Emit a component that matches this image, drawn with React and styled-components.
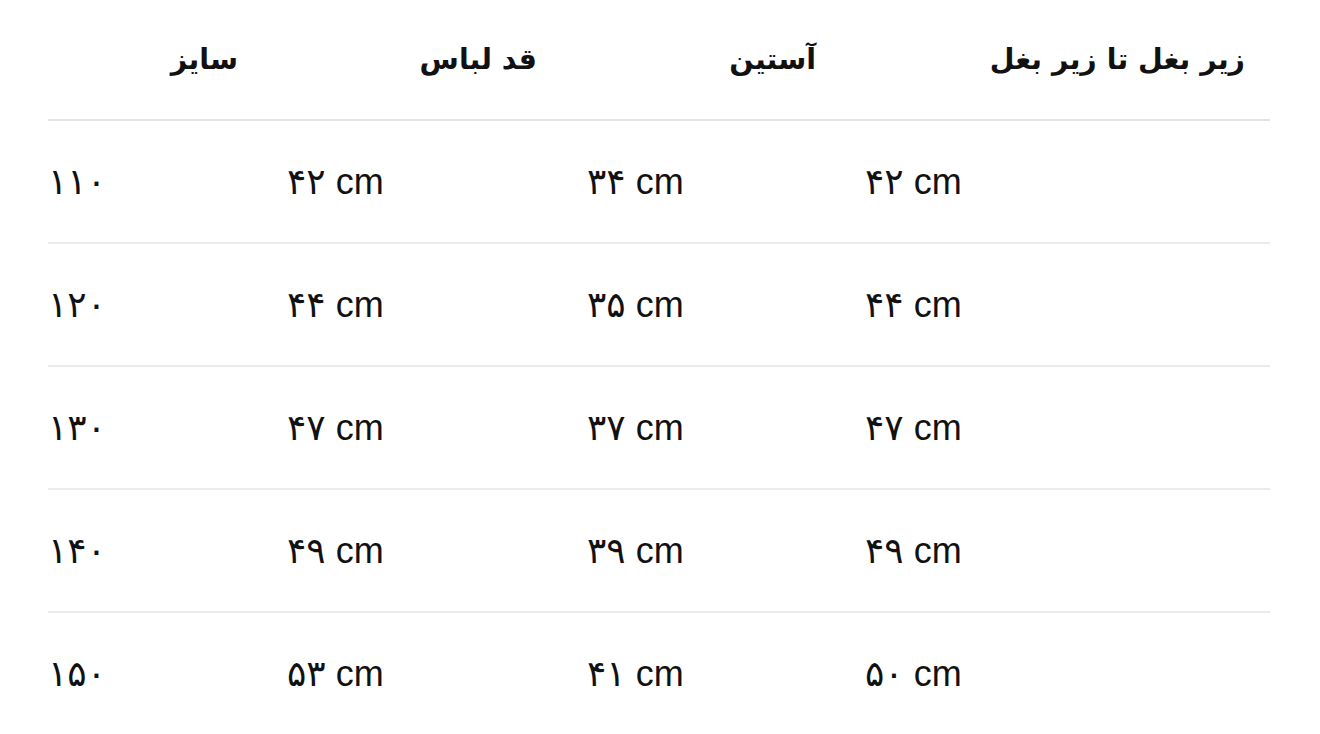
import React from "react";
import styled, { createGlobalStyle } from "styled-components";

const GlobalStyle = createGlobalStyle`
  body {
    margin: 0;
    background: #ffffff;
    font-family: "Liberation Sans", "DejaVu Sans", sans-serif;
    color: #111111;
  }
`;

// 사이즈 표 데이터
const columns = [
  { title: "سایز", width: "239px", pad: 49 },
  { title: "قد لباس", width: "300px", pad: 50 },
  { title: "آستین", width: "278px", pad: 49 },
  { title: "زیر بغل تا زیر بغل", width: "1fr", pad: 25 },
];

const rows = [
  ["۱۱۰", "۴۲ cm", "۳۴ cm", "۴۲ cm"],
  ["۱۲۰", "۴۴ cm", "۳۵ cm", "۴۴ cm"],
  ["۱۳۰", "۴۷ cm", "۳۷ cm", "۴۷ cm"],
  ["۱۴۰", "۴۹ cm", "۳۹ cm", "۴۹ cm"],
  ["۱۵۰", "۵۳ cm", "۴۱ cm", "۵۰ cm"],
];

function App() {
  const template = columns.map((c) => c.width).join(" ");
  return (
    <>
      <GlobalStyle />
      <Wrapper>
        <HeadRow $template={template}>
          {columns.map((c) => (
            <HeadCell key={c.title} $pad={c.pad}>
              {c.title}
            </HeadCell>
          ))}
        </HeadRow>
        {rows.map((row, i) => (
          <Row key={i} $template={template} $last={i === rows.length - 1}>
            {row.map((cell, j) => (
              <Cell key={j} $tight={j === 0}>
                {cell}
              </Cell>
            ))}
          </Row>
        ))}
      </Wrapper>
    </>
  );
}

const Wrapper = styled.div`
  padding: 0 50px 0 48px;
`;

const HeadRow = styled.div`
  display: grid;
  grid-template-columns: ${(p) => p.$template};
  height: 119px;
  align-items: center;
  border-bottom: 2px solid #e3e3e3;
`;

const HeadCell = styled.div`
  direction: rtl;
  text-align: right;
  padding-right: ${(p) => p.$pad}px;
  font-family: "DejaVu Sans", sans-serif;
  font-size: 28.5px;
  font-weight: 700;
  color: #111111;
`;

const Row = styled.div`
  display: grid;
  grid-template-columns: ${(p) => p.$template};
  height: 121px;
  align-items: center;
  border-bottom: 2px solid ${(p) => (p.$last ? "transparent" : "#ebebeb")};
`;

const Cell = styled.div`
  font-size: 36px;
  color: #111111;
  letter-spacing: ${(p) => (p.$tight ? "-4px" : "0")};
`;

export default App;
